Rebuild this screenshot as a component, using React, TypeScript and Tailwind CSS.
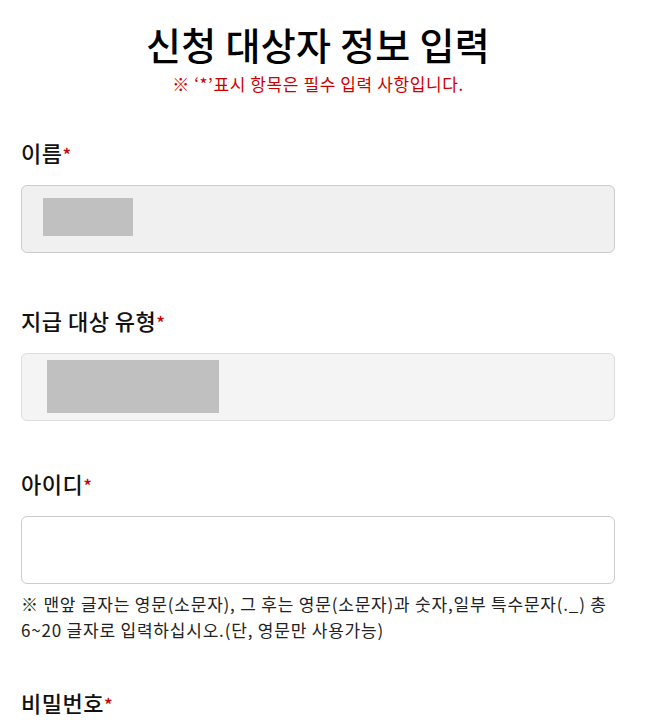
const font = { fontFamily: '"Noto Sans CJK KR", "Noto Sans", sans-serif' }

const Label = ({ text }: { text: string }) => (
    <p className="text-[22px] font-medium leading-[30px] tracking-[0.5px] text-[#111]">
        {text}<span className="text-[#c00] text-[18px]">*</span>
    </p>
)

const App = () => {
    return (
        <div className="w-full min-h-screen bg-white text-black" style={font}>
            <div className="ml-[21px] w-[594px] pt-[20px]">
                <h1 className="text-center text-[38px] font-medium leading-[48px] tracking-[0.3px]">신청 대상자 정보 입력</h1>
                <p className="mt-[5px] text-center text-[17px] leading-[22px] tracking-[0.6px] text-[#c00]">※ ‘*’표시 항목은 필수 입력 사항입니다.</p>

                <div className="mt-[42px]">
                    <Label text="이름" />
                    <div className="mt-[16px] h-[68px] rounded-md border border-[#ccc] bg-[#f0f0f0] px-[21px] pt-[12px]">
                        <div className="h-[38px] w-[90px] bg-[#c0c0c0]"></div>
                    </div>
                </div>

                <div className="mt-[52px]">
                    <Label text="지급 대상 유형" />
                    <div className="mt-[16px] h-[68px] rounded-md border border-[#ddd] bg-[#f4f4f4] px-[25px] pt-[6px]">
                        <div className="h-[53px] w-[172px] bg-[#c0c0c0]"></div>
                    </div>
                </div>

                <div className="mt-[47px]">
                    <Label text="아이디" />
                    <input className="mt-[16px] block h-[68px] w-full rounded-md border border-[#ccc] bg-white px-4 outline-none" />
                    <p className="mt-[7px] text-[17px] leading-[26px] tracking-[0.8px] text-[#222]">
                        ※ 맨앞 글자는 영문(소문자), 그 후는 영문(소문자)과 숫자,일부 특수문자(._) 총 6~20 글자로 입력하십시오.(단, 영문만 사용가능)
                    </p>
                </div>

                <div className="mt-[44px]">
                    <Label text="비밀번호" />
                </div>
            </div>
        </div>
    )
}

export default App
